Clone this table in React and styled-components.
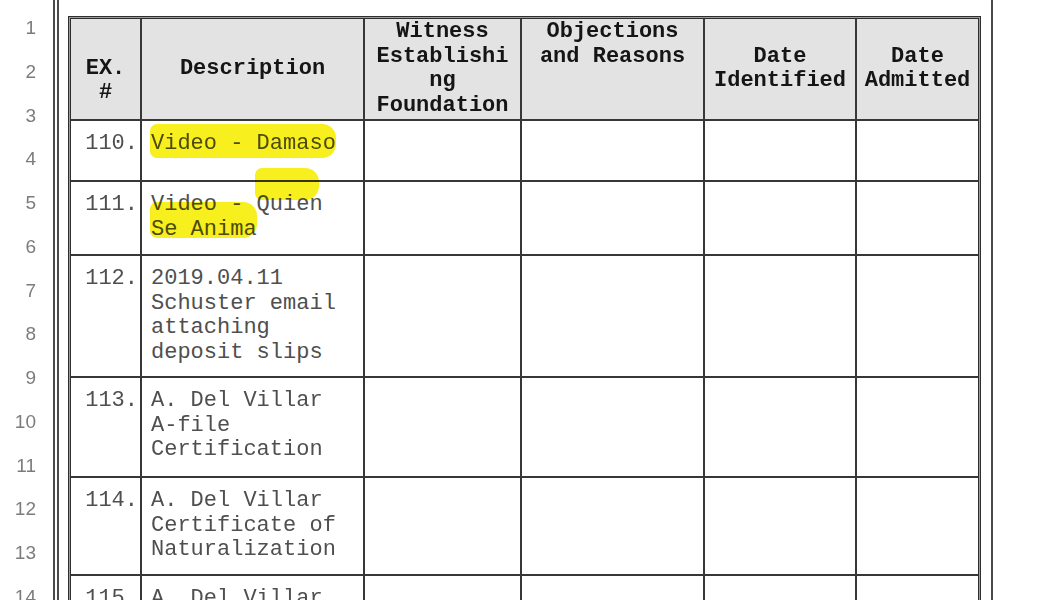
import React from 'react'
import styled, { createGlobalStyle } from 'styled-components'

const GlobalStyle = createGlobalStyle`
  html, body {
    margin: 0;
    padding: 0;
    background: #ffffff;
    overflow: hidden;
  }
`

const header = [
  { lines: ['', 'EX.', '#'] },
  { lines: ['Description'] },
  { lines: ['Witness', 'Establishi', 'ng', 'Foundation'] },
  { lines: ['Objections', 'and Reasons'], top: true },
  { lines: ['Date', 'Identified'] },
  { lines: ['Date', 'Admitted'] },
]

const exhibits = [
  { n: '110.', lines: ['Video - Damaso'], h: 59, marks: [{ top: 3, left: 8, w: 186, h: 34 }] },
  {
    n: '111.',
    lines: ['Video - Quien', 'Se Anima'],
    h: 72,
    marks: [
      { top: 20, left: 8, w: 107, h: 36 },
      { top: -14, left: 113, w: 64, h: 32 },
    ],
  },
  { n: '112.', lines: ['2019.04.11', 'Schuster email', 'attaching', 'deposit slips'], h: 120 },
  { n: '113.', lines: ['A. Del Villar', 'A-file', 'Certification'], h: 98 },
  { n: '114.', lines: ['A. Del Villar', 'Certificate of', 'Naturalization'], h: 96 },
  { n: '115.', lines: ['A. Del Villar', 'Birth Certificate'], h: 100 },
]

const lineNumbers = Array.from({ length: 14 }, (_, i) => i + 1)

export default function App() {
  const rowSizes = ['100px', ...exhibits.map((r) => `${r.h}px`)].join(' ')

  return (
    <>
      <GlobalStyle />
      <Page>
        <Gutter>
          {lineNumbers.map((n) => (
            <LineNo key={n}>{n}</LineNo>
          ))}
        </Gutter>
        <Frame>
          <TableFrame>
            <Grid $rows={rowSizes}>
              {header.map((h, i) => (
                <HeadCell key={i} $top={h.top}>
                  {h.lines.map((l, j) => (
                    <Line key={j}>{l || '\u00a0'}</Line>
                  ))}
                </HeadCell>
              ))}
              {exhibits.map((r) => (
                <React.Fragment key={r.n}>
                  <NumCell>{r.n}</NumCell>
                  <DescCell>
                    {r.lines.map((l, j) => (
                      <Line key={j}>{l}</Line>
                    ))}
                    {(r.marks || []).map((m, k) => (
                      <Highlight key={k} $top={m.top} $left={m.left} $w={m.w} $h={m.h} />
                    ))}
                  </DescCell>
                  <Cell />
                  <Cell />
                  <Cell />
                  <Cell />
                </React.Fragment>
              ))}
            </Grid>
          </TableFrame>
        </Frame>
      </Page>
    </>
  )
}

const Page = styled.div`
  display: flex;
  height: 600px;
  width: 1037px;
  overflow: hidden;
`

const Gutter = styled.div`
  width: 53px;
  box-sizing: border-box;
  padding: 6px 17px 0 0;
  display: flex;
  flex-direction: column;
  align-items: flex-end;
  font-family: "Liberation Sans", Arial, sans-serif;
  font-size: 19px;
  color: #7c7c7c;
`

const LineNo = styled.div`
  height: 43.77px;
  line-height: 43.77px;
  flex-shrink: 0;
`

const Frame = styled.div`
  width: 940px;
  box-sizing: border-box;
  border-left: 6px double #4a4a4a;
  border-right: 2px solid #4a4a4a;
  padding: 16px 10px 0 9px;
`

const TableFrame = styled.div`
  border: 1px solid #2e2e2e;
  padding: 1px;
  background: #9c9c9c;
`

const Grid = styled.div`
  display: grid;
  grid-template-columns: 69px 221px 155px 181px 150px 121px;
  grid-template-rows: ${(p) => p.$rows};
  gap: 2px;
  background: #373737;
  border: 1px solid #2e2e2e;
  font-family: "Liberation Mono", "Courier New", monospace;
  font-size: 22px;
  line-height: 24.5px;
`

const Cell = styled.div`
  background: #ffffff;
`

const HeadCell = styled.div`
  background: #e3e3e3;
  color: #151515;
  font-weight: bold;
  display: flex;
  flex-direction: column;
  align-items: center;
  justify-content: ${(p) => (p.$top ? 'flex-start' : 'center')};
  padding-top: ${(p) => (p.$top ? '1px' : '0')};
  text-align: center;
`

const Line = styled.div`
  white-space: pre;
`

const NumCell = styled.div`
  background: #ffffff;
  color: #4f4f4f;
  text-align: right;
  padding: 11px 2px 0 0;
`

const DescCell = styled.div`
  position: relative;
  background: #ffffff;
  color: #4f4f4f;
  padding: 11px 0 0 9px;
`

const Highlight = styled.span`
  position: absolute;
  top: ${(p) => p.$top}px;
  left: ${(p) => p.$left}px;
  width: ${(p) => p.$w}px;
  height: ${(p) => p.$h}px;
  background: #f7ef1e;
  border-radius: 7px 14px 14px 7px;
  mix-blend-mode: multiply;
  pointer-events: none;
`
